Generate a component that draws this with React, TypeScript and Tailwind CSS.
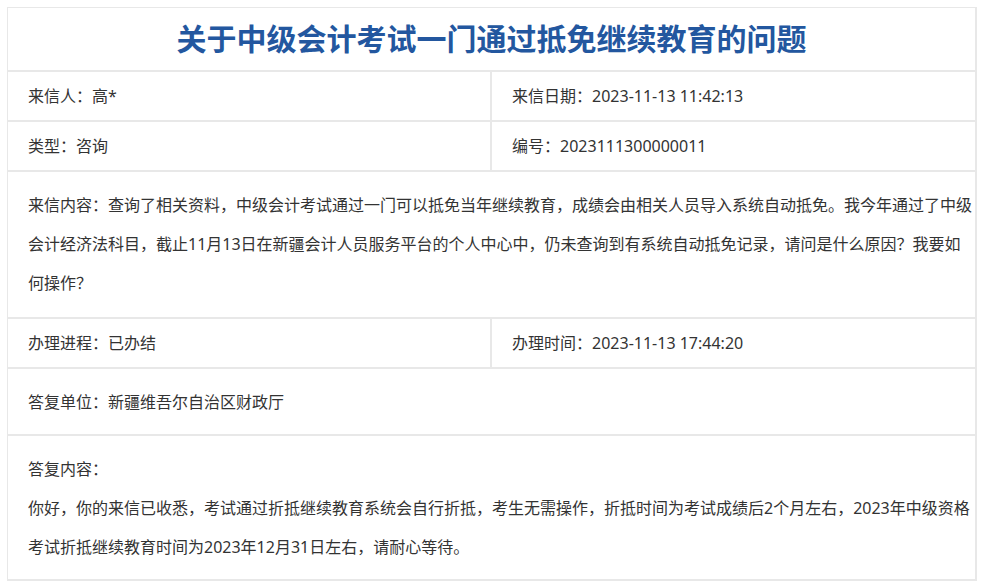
import React from 'react';

// Types
interface FieldProps {
  label: string;
  value: string;
}

function Field({ label, value }: FieldProps) {
  return (
    <div className="flex h-[50px] items-center border-r-2 border-b-2 border-[#e8e8e8] pl-5">
      <span>
        {label}：{value}
      </span>
    </div>
  );
}

export default function App() {
  return (
    <div
      className="min-h-[586px] bg-white pt-[7px] pl-[7px] text-[16px] text-[#333]"
      style={{ fontFamily: '"Noto Sans", "Noto Sans CJK SC", sans-serif' }}
    >
      <div className="w-[970px] border-t border-l border-[#e8e8e8]">
        {/* Title */}
        <div className="h-[64px] border-r-2 border-b-2 border-[#e8e8e8] pt-[16px] text-center">
          <h1 className="text-[30px] leading-[30px] font-bold text-[#23579f]">
            关于中级会计考试一门通过抵免继续教育的问题
          </h1>
        </div>

        {/* Basic info */}
        <div className="grid grid-cols-[484px_485px]">
          <Field label="来信人" value="高*" />
          <Field label="来信日期" value="2023-11-13 11:42:13" />
          <Field label="类型" value="咨询" />
          <Field label="编号" value="2023111300000011" />
        </div>

        {/* Letter content */}
        <div className="border-r-2 border-b-2 border-[#e8e8e8] py-[14px] pl-5 pr-0 leading-[39px]">
          来信内容：查询了相关资料，中级会计考试通过一门可以抵免当年继续教育，成绩会由相关人员导入系统自动抵免。我今年通过了中级会计经济法科目，截止11月13日在新疆会计人员服务平台的个人中心中，仍未查询到有系统自动抵免记录，请问是什么原因？我要如何操作？
        </div>

        {/* Progress */}
        <div className="grid grid-cols-[484px_485px]">
          <Field label="办理进程" value="已办结" />
          <Field label="办理时间" value="2023-11-13 17:44:20" />
        </div>

        {/* Reply unit */}
        <div className="flex h-[67px] items-center border-r-2 border-b-2 border-[#e8e8e8] pl-5">
          答复单位：新疆维吾尔自治区财政厅
        </div>

        {/* Reply content */}
        <div className="border-r-2 border-b-2 border-[#e8e8e8] pt-[14px] pb-[12px] pl-5 pr-0 leading-[39px]">
          <p>答复内容：</p>
          <p>
            你好，你的来信已收悉，考试通过折抵继续教育系统会自行折抵，考生无需操作，折抵时间为考试成绩后2个月左右，2023年中级资格考试折抵继续教育时间为2023年12月31日左右，请耐心等待。
          </p>
        </div>
      </div>
    </div>
  );
}
